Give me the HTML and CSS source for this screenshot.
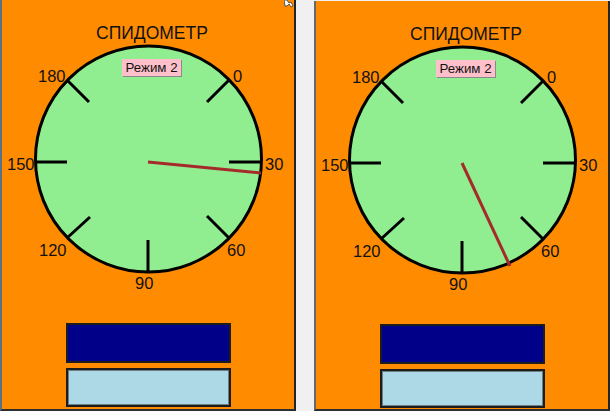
FILE: index.html
```html
<!DOCTYPE html>
<html lang="ru">
<head>
<meta charset="utf-8">
<title>Спидометр</title>
<link rel="stylesheet" href="styles.css">
</head>
<body>
<div class="screen">
  <section class="panel panel-left">
    <h1 class="title">СПИДОМЕТР</h1>
    <div class="dial">
      <svg class="dial-svg" width="292" height="250" viewBox="0 0 292 250">
        <circle cx="146.5" cy="116" r="113" class="face"/>
        <g class="ticks">
          <line x1="65" y1="37" x2="87" y2="59"/>
          <line x1="227" y1="37" x2="205" y2="59"/>
          <line x1="33" y1="119" x2="65" y2="119"/>
          <line x1="227" y1="119" x2="260" y2="119"/>
          <line x1="65" y1="195" x2="88" y2="174"/>
          <line x1="227" y1="195" x2="205" y2="173"/>
          <line x1="146" y1="197" x2="146" y2="230"/>
        </g>
        <g class="labels">
          <text x="36" y="39">180</text>
          <text x="231" y="39">0</text>
          <text x="5" y="127">150</text>
          <text x="263" y="127">30</text>
          <text x="37" y="213">120</text>
          <text x="225" y="213">60</text>
          <text x="133" y="246">90</text>
        </g>
        <line class="needle" x1="146" y1="119" x2="259" y2="130"/>
      </svg>
      <div class="mode">Режим 2</div>
    </div>
    <div class="buttons">
      <div class="btn btn-dark"></div>
      <div class="btn btn-light"></div>
    </div>
    <svg class="cursor" width="12" height="8" viewBox="0 0 12 8">
      <polygon points="0,0 3,0 5,3 7,2 9,6 7,7 5,4 3,6 1,6" fill="#fff" stroke="#333" stroke-width="0.8"/>
    </svg>
  </section>
  <section class="panel panel-right">
    <h1 class="title">СПИДОМЕТР</h1>
    <div class="dial">
      <svg class="dial-svg" width="292" height="250" viewBox="0 0 292 250">
        <circle cx="146.5" cy="116" r="113" class="face"/>
        <g class="ticks">
          <line x1="65" y1="37" x2="87" y2="59"/>
          <line x1="227" y1="37" x2="205" y2="59"/>
          <line x1="33" y1="119" x2="65" y2="119"/>
          <line x1="227" y1="119" x2="260" y2="119"/>
          <line x1="65" y1="195" x2="88" y2="174"/>
          <line x1="227" y1="195" x2="205" y2="173"/>
          <line x1="146" y1="197" x2="146" y2="230"/>
        </g>
        <g class="labels">
          <text x="36" y="39">180</text>
          <text x="231" y="39">0</text>
          <text x="5" y="127">150</text>
          <text x="263" y="127">30</text>
          <text x="37" y="213">120</text>
          <text x="225" y="213">60</text>
          <text x="133" y="246">90</text>
        </g>
        <line class="needle" x1="146" y1="119" x2="194" y2="222"/>
      </svg>
      <div class="mode">Режим 2</div>
    </div>
    <div class="buttons">
      <div class="btn btn-dark"></div>
      <div class="btn btn-light"></div>
    </div>
  </section>
</div>
</body>
</html>
```
FILE: styles.css
```css
html, body {
  margin: 0;
  padding: 0;
  background: #f0f0f0;
}
body {
  width: 610px;
  height: 411px;
  overflow: hidden;
  font-family: "Liberation Sans", Arial, sans-serif;
}
.screen {
  display: flex;
  gap: 18px;
  width: 610px;
  height: 411px;
  align-items: flex-start;
}
.panel {
  position: relative;
  width: 292px;
  background: #ff8c00;
  border-right: 2px solid #242424;
  border-bottom: 2px solid #2e2e2e;
  padding-top: 23px;
  box-sizing: content-box;
  display: flex;
  flex-direction: column;
}
.panel-left {
  height: 386px;
  border-left: 2px solid #587088;
}
.panel-right {
  margin-top: 1px;
  height: 385px;
  border-left: 2px solid #686868;
}
.title {
  margin: 0 0 0 94px;
  font-weight: normal;
  font-size: 17.5px;
  line-height: 20px;
  color: #111;
  white-space: nowrap;
}
.dial {
  position: relative;
  height: 250px;
}
.dial-svg {
  display: block;
}
.face {
  fill: #90ee90;
  stroke: #000;
  stroke-width: 3;
}
.ticks line {
  stroke: #000;
  stroke-width: 3;
}
.labels text {
  font-family: "Liberation Sans", Arial, sans-serif;
  font-size: 16.5px;
  fill: #111;
}
.needle {
  stroke: #a52a2a;
  stroke-width: 3;
}
.mode {
  position: absolute;
  left: 120px;
  top: 16px;
  width: 59px;
  height: 17px;
  background: #ffc0cb;
  box-shadow: 1px 1px 0 #8a8a8a;
  font-size: 13.3px;
  line-height: 17px;
  text-align: center;
  color: #111;
}
.buttons {
  margin: 30px 0 0 64px;
  display: flex;
  flex-direction: column;
  gap: 5px;
}
.btn {
  width: 161px;
  box-sizing: content-box;
  border: 2px solid #1c1c1c;
}
.btn-dark {
  height: 36px;
  background: #000088;
}
.btn-light {
  height: 35px;
  background: #add8e6;
  box-shadow: inset 0 0 0 1px #6d7f86;
}
.cursor {
  position: absolute;
  left: 282px;
  top: 0;
}
```
